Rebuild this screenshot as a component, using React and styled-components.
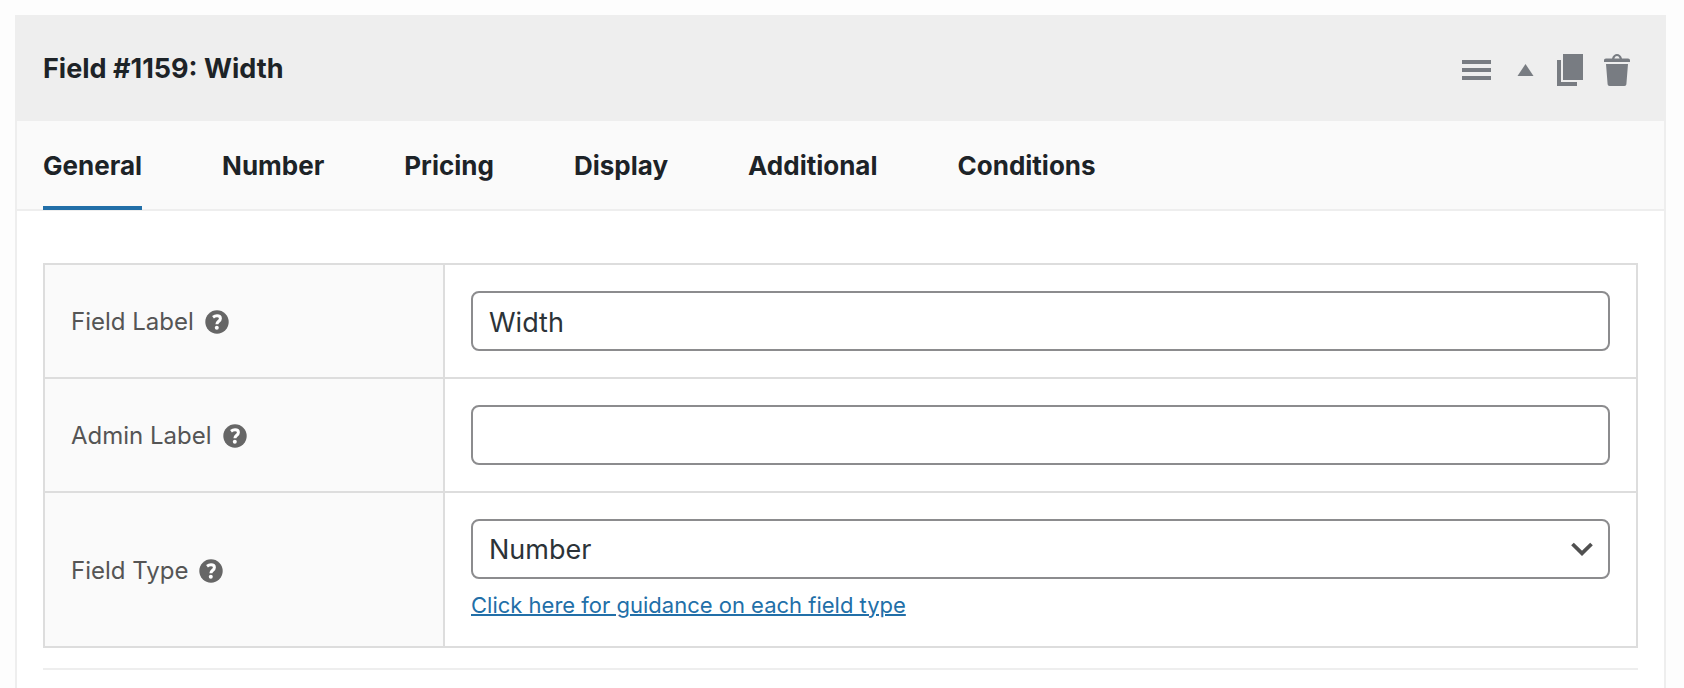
import React, { useState } from "react";
import styled, { createGlobalStyle } from "styled-components";

const GlobalStyle = createGlobalStyle`
  *, *::before, *::after { box-sizing: border-box; }
  body {
    margin: 0;
    background: #fdfdfd;
    color: #1d2327;
    font-family: Inter, "Liberation Sans", sans-serif;
    font-size: 26px;
  }
`;

const Page = styled.main`
  padding: 15px 18px 0 15px;
`;

const Panel = styled.section`
  border: 2px solid #eeeeee;
  border-top: 0;
  border-bottom: 0;
  background: #ffffff;
`;

const PanelHeader = styled.header`
  display: flex;
  align-items: center;
  justify-content: space-between;
  min-height: 106px;
  padding: 0 33px 0 26px;
  background: #eeeeee;
`;

const Title = styled.h2`
  margin: 0;
  padding-top: 2px;
  font-size: 27px;
  line-height: 32px;
  font-weight: 700;
`;

const Actions = styled.div`
  display: flex;
  align-items: center;
  gap: 20px;
`;

const IconButton = styled.button`
  display: flex;
  padding: 0;
  border: 0;
  background: none;
  color: #787c82;
  cursor: pointer;
`;

const TabList = styled.div`
  display: flex;
  gap: 80px;
  padding: 0 26px;
  background: #fafafa;
  border-bottom: 2px solid #eeeeee;
`;

const Tab = styled.button`
  padding: 30px 0 26px;
  margin-bottom: -1px;
  border: 0;
  border-bottom: 4px solid ${(p) => (p.$active ? "#226fa8" : "transparent")};
  background: none;
  color: inherit;
  font: inherit;
  font-weight: 700;
  line-height: 29px;
  cursor: pointer;
`;

const PanelBody = styled.div`
  padding: 52px 26px 18px;
`;

const SettingsTable = styled.table`
  width: 100%;
  border-collapse: collapse;
  table-layout: fixed;
`;

const LabelColumn = styled.col`
  width: 400px;
`;

const LabelCell = styled.th`
  padding: 2px 26px 0;
  border: 2px solid #dddddd;
  background: #fafafa;
  text-align: left;
  vertical-align: middle;
`;

const LabelGroup = styled.div`
  display: flex;
  align-items: center;
  gap: 11px;
`;

const FieldName = styled.label`
  color: #555555;
  font-size: 24px;
  line-height: 30px;
  font-weight: 400;
`;

const HelpButton = styled(IconButton)`
  color: #666666;
`;

const ControlCell = styled.td`
  padding: 26px;
  border: 2px solid #dddddd;
`;

const TextInput = styled.input`
  display: block;
  width: 100%;
  height: 60px;
  padding: 2px 16px 0;
  border: 2px solid #8c8c8e;
  border-radius: 8px;
  background: #ffffff;
  color: #2c3338;
  font: inherit;
  font-size: 27px;
`;

const SelectWrap = styled.div`
  position: relative;
`;

const Select = styled(TextInput).attrs({ as: "select" })`
  appearance: none;
  padding: 0 48px 0 16px;
`;

const Chevron = styled.svg`
  position: absolute;
  right: 17px;
  top: 50%;
  transform: translateY(-50%);
  pointer-events: none;
`;

const Guidance = styled.p`
  margin: 12px 0 0;
  font-size: 22px;
  line-height: 29px;
`;

const GuidanceLink = styled.a`
  color: #226fa8;
  text-decoration: underline;
  text-decoration-thickness: 2px;
`;

const Divider = styled.hr`
  margin: 20px 0 0;
  border: 0;
  border-top: 2px solid #eeeeee;
`;

const MenuIcon = () => (
  <svg width="34" height="36" viewBox="0 0 34 36" fill="currentColor" aria-hidden="true">
    <path d="M1 10h29v4H1zM1 18h29v4H1zM1 26h29v4H1z" />
  </svg>
);

const CollapseIcon = () => (
  <svg width="20" height="36" viewBox="0 0 20 36" fill="currentColor" aria-hidden="true">
    <path d="M10.5 14L18.5 26H2.5z" />
  </svg>
);

const DuplicateIcon = () => (
  <svg width="28" height="36" viewBox="0 0 28 36" fill="currentColor" aria-hidden="true">
    <path d="M8 4h20v26H8zM2 10h4v22h16v4H2z" />
  </svg>
);

const TrashIcon = () => (
  <svg width="28" height="36" viewBox="0 0 28 36" fill="currentColor" aria-hidden="true">
    <path d="M9 8.5c.8-3 2.8-4.5 5-4.5s4.200 1.500 5 4.500h6c1.300 0 2 .8 2 2V12H1v-1.500c0-1.200.7-2 2-2zM11.300 8.500h5.400c-.6-1.700-1.600-2.500-2.700-2.500s-2.100.8-2.700 2.500z" fillRule="evenodd" />
    <path d="M3 14h22l-1.600 20c-.1 1.300-.8 2-2 2H6.600c-1.200 0-1.900-.7-2-2z" />
  </svg>
);

const HelpIcon = () => (
  <svg width="24" height="24" viewBox="0 0 24 24" fill="none" aria-hidden="true">
    <circle cx="12" cy="12" r="11.700" fill="currentColor" />
    <path d="M8 7.200c1.200-.9 2.500-1.400 4-1.400 2.100 0 3.400 1 3.400 2.700 0 2.800-3.500 2.700-3.500 5.800" stroke="#fff" strokeWidth="3" />
    <circle cx="11.800" cy="17.800" r="2" fill="#fff" />
  </svg>
);

const TABS = ["General", "Number", "Pricing", "Display", "Additional", "Conditions"];

function SettingRow({ id, name, children }) {
  return (
    <tr>
      <LabelCell scope="row">
        <LabelGroup>
          <FieldName htmlFor={id}>{name}</FieldName>
          <HelpButton type="button" aria-label={`Help: ${name}`}>
            <HelpIcon />
          </HelpButton>
        </LabelGroup>
      </LabelCell>
      <ControlCell>{children}</ControlCell>
    </tr>
  );
}

export default function App() {
  const [activeTab, setActiveTab] = useState("General");
  return (
    <>
      <GlobalStyle />
      <Page>
        <Panel>
          <PanelHeader>
            <Title>Field #1159: Width</Title>
            <Actions>
              <IconButton type="button" aria-label="Reorder field"><MenuIcon /></IconButton>
              <IconButton type="button" aria-label="Collapse field"><CollapseIcon /></IconButton>
              <IconButton type="button" aria-label="Duplicate field"><DuplicateIcon /></IconButton>
              <IconButton type="button" aria-label="Delete field"><TrashIcon /></IconButton>
            </Actions>
          </PanelHeader>
          <TabList role="tablist">
            {TABS.map((tab) => (
              <Tab
                key={tab}
                type="button"
                role="tab"
                aria-selected={tab === activeTab}
                $active={tab === activeTab}
                onClick={() => setActiveTab(tab)}
              >
                {tab}
              </Tab>
            ))}
          </TabList>
          <PanelBody>
            <SettingsTable>
              <colgroup>
                <LabelColumn />
                <col />
              </colgroup>
              <tbody>
                <SettingRow id="field-label" name="Field Label">
                  <TextInput id="field-label" type="text" defaultValue="Width" />
                </SettingRow>
                <SettingRow id="admin-label" name="Admin Label">
                  <TextInput id="admin-label" type="text" />
                </SettingRow>
                <SettingRow id="field-type" name="Field Type">
                  <SelectWrap>
                    <Select id="field-type" defaultValue="Number">
                      <option>Number</option>
                      <option>Text</option>
                    </Select>
                    <Chevron width="22" height="14" viewBox="0 0 22 14" fill="none" aria-hidden="true">
                      <path d="M1.500 2L11 11.300 20.500 2" stroke="#505050" strokeWidth="3.800" />
                    </Chevron>
                  </SelectWrap>
                  <Guidance>
                    <GuidanceLink href="#guidance">Click here for guidance on each field type</GuidanceLink>
                  </Guidance>
                </SettingRow>
              </tbody>
            </SettingsTable>
            <Divider />
          </PanelBody>
        </Panel>
      </Page>
    </>
  );
}
